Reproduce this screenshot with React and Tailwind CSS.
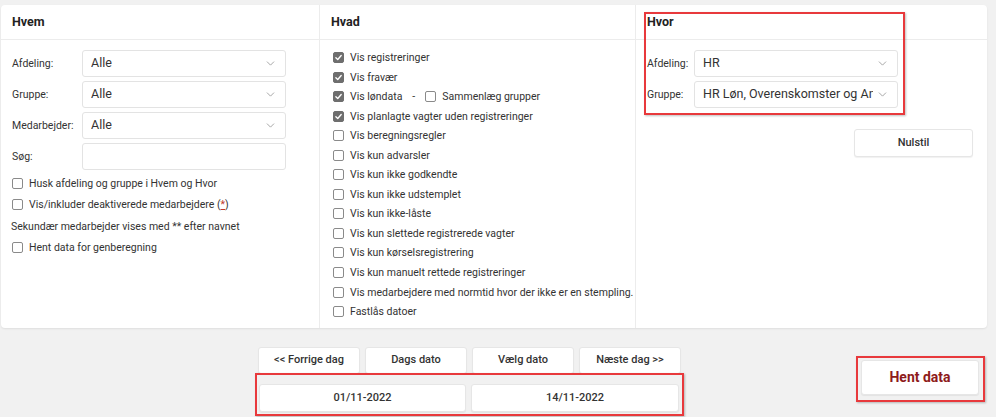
import React from 'react';
import { ChevronDown } from 'lucide-react';

const Check = ({ checked }) => (
  <span
    className={`inline-flex items-center justify-center w-[11px] h-[11px] rounded-[2px] shrink-0 ${
      checked ? 'bg-[#6e6e6e] border border-[#6e6e6e]' : 'bg-white border border-[#8a8a8a]'
    }`}
  >
    {checked && (
      <svg viewBox="0 0 12 12" className="w-[9px] h-[9px]">
        <path d="M2.5 6.2 L5 8.6 L9.6 3.4" fill="none" stroke="white" strokeWidth="1.8" strokeLinecap="round" strokeLinejoin="round" />
      </svg>
    )}
  </span>
);

const CheckRow = ({ checked, children, className = '' }) => (
  <div className={`flex items-center gap-[6px] h-[13px] text-[10.5px] leading-[13px] text-[#333] whitespace-nowrap ${className}`}>
    <Check checked={checked} />
    <span>{children}</span>
  </div>
);

const Select = ({ value, width = 'w-[204px]', size = 'text-[12.5px]' }) => (
  <div className={`${width} h-[27px] flex items-center justify-between pl-[8px] pr-[8px] bg-white border border-[#e3e3e3] rounded-[3px]`}>
    <span className={`${size} text-[#333] whitespace-nowrap overflow-hidden`}>{value}</span>
    <ChevronDown className="w-[13px] h-[13px] text-[#9a9a9a] shrink-0 ml-[3px]" strokeWidth={1.6} />
  </div>
);

const Btn = ({ children, className = '' }) => (
  <div className={`h-[27px] flex items-center justify-center bg-white border border-[#e6e6e6] rounded-[3px] shadow-[0_1px_1px_rgba(0,0,0,0.06)] text-[11px] font-medium text-[#333] ${className}`}>
    {children}
  </div>
);

const hvad = [
  ['Vis registreringer', true],
  ['Vis fravær', true],
  ['LON', true],
  ['Vis planlagte vagter uden registreringer', true],
  ['Vis beregningsregler', false],
  ['Vis kun advarsler', false],
  ['Vis kun ikke godkendte', false],
  ['Vis kun ikke udstemplet', false],
  ['Vis kun ikke-låste', false],
  ['Vis kun slettede registrerede vagter', false],
  ['Vis kun kørselsregistrering', false],
  ['Vis kun manuelt rettede registreringer', false],
  ['Vis medarbejdere med normtid hvor der ikke er en stempling.', false],
  ['Fastlås datoer', false],
];

export default function App() {
  return (
    <div className="w-[996px] h-[417px] bg-[#f1f1f1] pt-[5px] pl-[1px] relative overflow-hidden" style={{ fontFamily: 'Roboto, "Liberation Sans", sans-serif' }}>
      {/* main card */}
      <div className="w-[986px] h-[323px] bg-white rounded-[4px] shadow-[0_1px_2px_rgba(0,0,0,0.08)] grid grid-cols-[319px_316px_1fr]">
        {/* Hvem */}
        <div className="border-r border-[#ececec] flex flex-col">
          <div className="h-[35px] border-b border-[#ececec] flex items-center pl-[11px] text-[12.5px] font-bold text-[#222]">Hvem</div>
          <div className="pl-[11px] pt-[10px] flex flex-col">
            <div className="flex flex-col gap-[4px]">
              {['Afdeling:', 'Gruppe:', 'Medarbejder:'].map((l) => (
                <div key={l} className="flex items-center">
                  <span className="w-[70px] text-[10.5px] text-[#333]">{l}</span>
                  <Select value="Alle" />
                </div>
              ))}
              <div className="flex items-center">
                <span className="w-[70px] text-[10.5px] text-[#333]">Søg:</span>
                <div className="w-[204px] h-[27px] bg-white border border-[#e3e3e3] rounded-[3px]" />
              </div>
            </div>
            <div className="flex flex-col gap-[8.3px] mt-[7px]">
              <CheckRow>Husk afdeling og gruppe i Hvem og Hvor</CheckRow>
              <CheckRow>
                Vis/inkluder deaktiverede medarbejdere (<span className="text-[#c0392b] underline">*</span>)
              </CheckRow>
              <div className="h-[13px] leading-[13px] text-[10.5px] text-[#333] -ml-[1px] whitespace-nowrap">Sekundær medarbejder vises med ** efter navnet</div>
              <CheckRow>Hent data for genberegning</CheckRow>
            </div>
          </div>
        </div>

        {/* Hvad */}
        <div className="border-r border-[#ececec] flex flex-col">
          <div className="h-[35px] border-b border-[#ececec] flex items-center pl-[11px] text-[12.5px] font-bold text-[#222]">Hvad</div>
          <div className="pl-[13px] pt-[11px] flex flex-col gap-[6.55px]">
            {hvad.map(([t, c]) =>
              t === 'LON' ? (
                <div key={t} className="flex items-center gap-[6px] h-[13px] leading-[13px] text-[10.5px] text-[#333] whitespace-nowrap">
                  <Check checked />
                  <span>Vis løndata</span>
                  <span className="mx-[4px]">-</span>
                  <Check />
                  <span>Sammenlæg grupper</span>
                </div>
              ) : (
                <CheckRow key={t} checked={c}>{t}</CheckRow>
              )
            )}
          </div>
        </div>

        {/* Hvor */}
        <div className="flex flex-col">
          <div className="h-[35px] border-b border-[#ececec] flex items-center pl-[11px] text-[12.5px] font-bold text-[#222]">Hvor</div>
          <div className="pl-[11px] pt-[10px] flex flex-col gap-[4px]">
            <div className="flex items-center">
              <span className="w-[47px] text-[10.5px] text-[#333]">Afdeling:</span>
              <Select value="HR" />
            </div>
            <div className="flex items-center">
              <span className="w-[47px] text-[10.5px] text-[#333]">Gruppe:</span>
              <Select value="HR Løn, Overenskomster og Ansættelse" />
            </div>
          </div>
          <div className="flex justify-end pr-[14px] mt-[21px]">
            <Btn className="w-[119px] h-[28px]">Nulstil</Btn>
          </div>
        </div>
      </div>

      {/* bottom buttons */}
      <div className="flex items-start mt-[19px]">
        <div className="ml-[257px] flex flex-col gap-[10px]">
          <div className="flex gap-[5px]">
            <Btn className="w-[102px]">&lt;&lt; Forrige dag</Btn>
            <Btn className="w-[102px]">Dags dato</Btn>
            <Btn className="w-[102px]">Vælg dato</Btn>
            <Btn className="w-[102px]">Næste dag &gt;&gt;</Btn>
          </div>
          <div className="flex gap-[5px] ml-[1px]">
            <Btn className="w-[207px] h-[28px] text-[11.5px]">01/11-2022</Btn>
            <Btn className="w-[208px] h-[28px] text-[11.5px]">14/11-2022</Btn>
          </div>
        </div>
        <div className="ml-auto mr-[17px] mt-[13px]">
          <Btn className="w-[118px] h-[35px] !text-[14px] !font-bold !text-[#8e1b1b]">Hent data</Btn>
        </div>
      </div>

      {/* red annotation boxes */}
      <div className="absolute left-[644px] top-[12px] w-[261px] h-[103px] border-2 border-[#e8393c] shadow-[1px_1px_2px_rgba(0,0,0,0.25)] pointer-events-none" />
      <div className="absolute left-[255px] top-[373px] w-[429px] h-[43px] border-2 border-[#e8393c] shadow-[1px_1px_2px_rgba(0,0,0,0.25)] pointer-events-none" />
      <div className="absolute left-[856px] top-[356px] w-[129px] h-[46px] border-2 border-[#e8393c] shadow-[1px_1px_2px_rgba(0,0,0,0.25)] pointer-events-none" />
    </div>
  );
}
